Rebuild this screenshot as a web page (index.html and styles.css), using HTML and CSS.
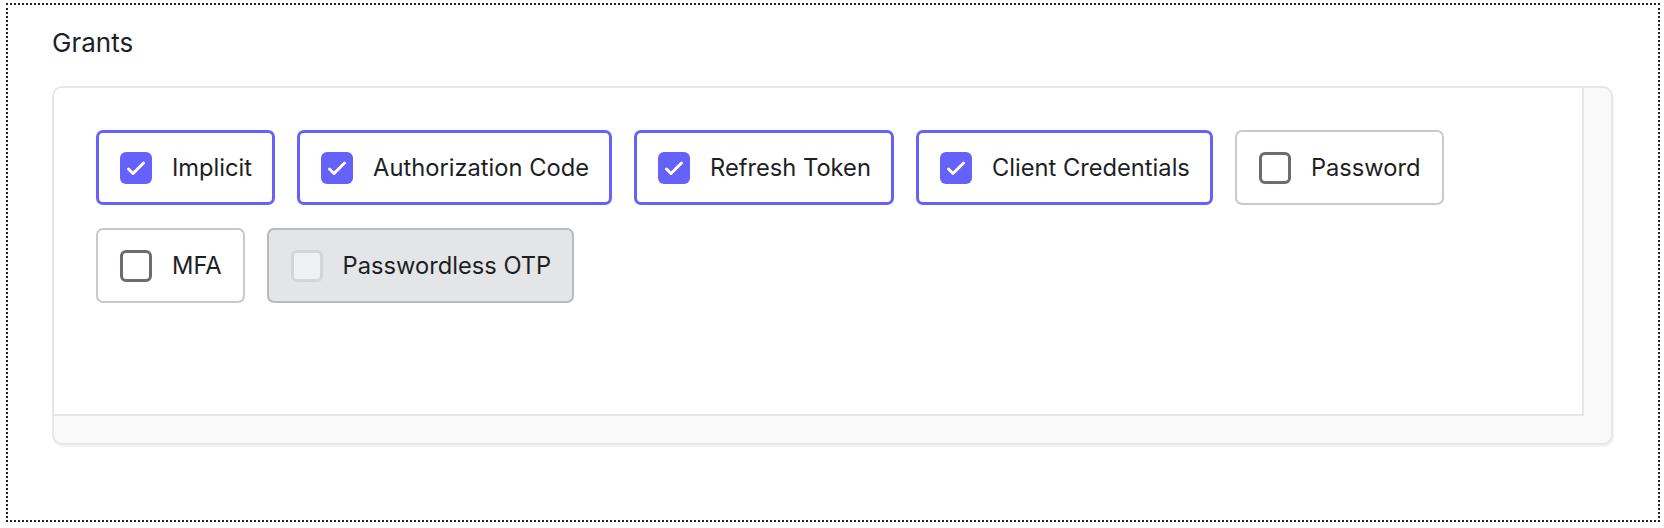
FILE: index.html
```html
<!DOCTYPE html>
<html lang="en">
<head>
<meta charset="utf-8">
<title>Grants</title>
<link rel="stylesheet" href="styles.css">
</head>
<body>
<div class="frame">
  <h2 class="title">Grants</h2>
  <div class="card">
    <div class="panel">
      <div class="grants">
        <label class="grant checked"><span class="box"><svg viewBox="0 0 32 32" width="32" height="32"><polyline points="8.5,17 13,21.5 23.5,11" fill="none" stroke="#fff" stroke-width="3" stroke-linecap="round" stroke-linejoin="round"/></svg></span><span class="label">Implicit</span></label>
        <label class="grant checked"><span class="box"><svg viewBox="0 0 32 32" width="32" height="32"><polyline points="8.5,17 13,21.5 23.5,11" fill="none" stroke="#fff" stroke-width="3" stroke-linecap="round" stroke-linejoin="round"/></svg></span><span class="label">Authorization Code</span></label>
        <label class="grant checked"><span class="box"><svg viewBox="0 0 32 32" width="32" height="32"><polyline points="8.5,17 13,21.5 23.5,11" fill="none" stroke="#fff" stroke-width="3" stroke-linecap="round" stroke-linejoin="round"/></svg></span><span class="label">Refresh Token</span></label>
        <label class="grant checked"><span class="box"><svg viewBox="0 0 32 32" width="32" height="32"><polyline points="8.5,17 13,21.5 23.5,11" fill="none" stroke="#fff" stroke-width="3" stroke-linecap="round" stroke-linejoin="round"/></svg></span><span class="label">Client Credentials</span></label>
        <label class="grant"><span class="box"></span><span class="label">Password</span></label>
        <label class="grant"><span class="box"></span><span class="label">MFA</span></label>
        <label class="grant disabled"><span class="box"></span><span class="label">Passwordless OTP</span></label>
      </div>
    </div>
    <div class="track-v"></div>
    <div class="track-h"></div>
    <div class="corner"></div>
  </div>
</div>
</body>
</html>
```
FILE: styles.css
```css
html, body {
  margin: 0;
  padding: 0;
  background: #fff;
}
body {
  font-family: Inter, "Noto Sans", "Liberation Sans", sans-serif;
  color: #1e1f25;
}
.frame {
  box-sizing: border-box;
  width: 1654px;
  height: 519px;
  margin: 3px 0 0 6px;
  border: 2px dotted #222;
  padding: 22px 45px 0 44px;
}
.title {
  margin: 0;
  font-size: 26px;
  font-weight: 400;
  line-height: 31px;
  color: #1d1f26;
}
.card {
  box-sizing: border-box;
  margin-top: 28px;
  height: 359px;
  border: 2px solid #e7e7e7;
  border-radius: 10px;
  background: #f9f9f9;
  box-shadow: 1px 2px 1px rgba(0, 0, 0, 0.05);
  overflow: hidden;
  display: grid;
  grid-template-columns: 1fr 27px;
  grid-template-rows: 1fr 27px;
}
.panel {
  background: #fff;
  border-right: 2px solid #e6e6e6;
  border-bottom: 2px solid #e6e6e6;
  padding: 42px 40px 0 42px;
}
.grants {
  display: flex;
  flex-wrap: wrap;
  gap: 23px 22px;
}
.grant {
  box-sizing: border-box;
  height: 75px;
  display: inline-flex;
  align-items: center;
  gap: 20px;
  border: 2px solid #c9c9cb;
  border-radius: 7px;
  padding: 0 21px 0 22px;
  background: #fff;
  font-size: 23.7px;
  color: #1e1f25;
  cursor: pointer;
}
.grant.checked {
  border: 3px solid #6561fb;
  padding: 0 20px 0 21px;
}
.box {
  box-sizing: border-box;
  width: 32px;
  height: 32px;
  border-radius: 6px;
  border: 3px solid #6b6c73;
  background: #fff;
  display: block;
  flex: none;
}
.box svg {
  display: block;
}
.checked .box {
  border: 0;
  background: #6561fb;
}
.grant.disabled {
  background: #e4e5e7;
  border-color: #b9babd;
}
.disabled .box {
  background: #eff0f2;
  border-color: #d4d5d8;
}
.label {
  white-space: nowrap;
}
```
